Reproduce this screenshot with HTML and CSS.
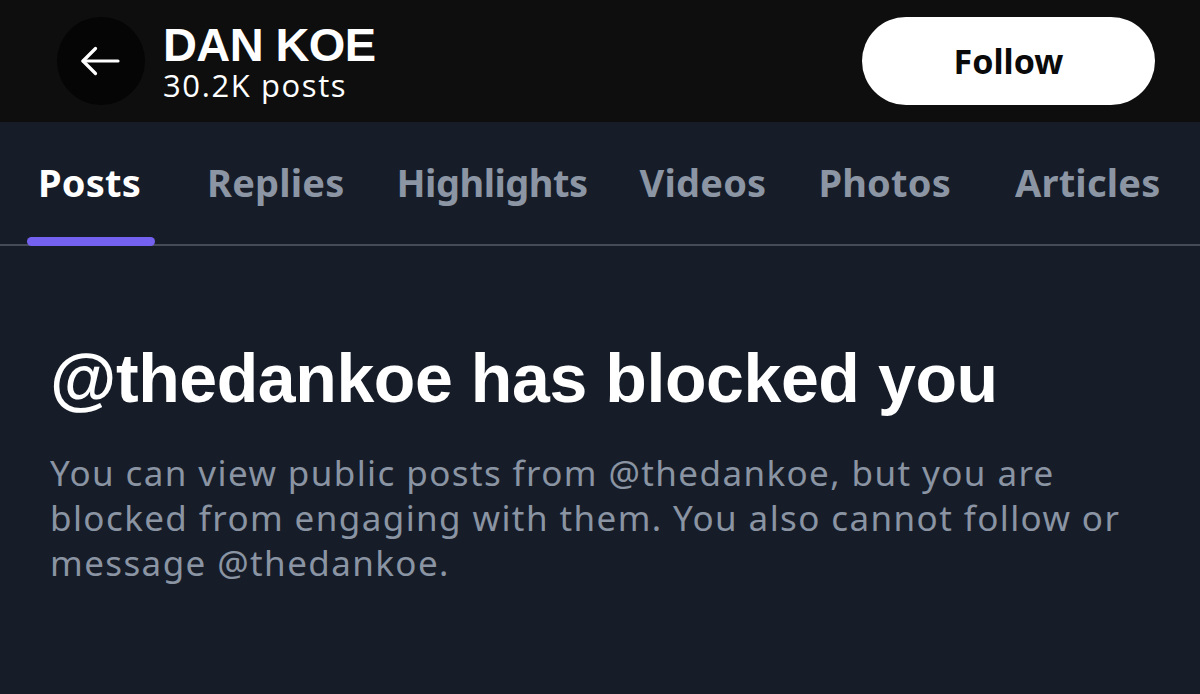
FILE: index.html
```html
<!DOCTYPE html>
<html lang="en">
<head>
<meta charset="utf-8">
<title>DAN KOE</title>
<link rel="stylesheet" href="styles.css">
</head>
<body>
<div class="page">
  <header class="topbar">
    <div class="left">
      <button class="back" aria-label="Back">
        <svg width="40" height="32" viewBox="0 0 40 32" fill="none" stroke="#ffffff" stroke-width="3.2" stroke-linecap="round" stroke-linejoin="round"><path d="M38 16H3"/><path d="M15.5 3.5L3 16l12.5 12.5"/></svg>
      </button>
      <div class="who">
        <div class="name">DAN KOE</div>
        <div class="count">30.2K posts</div>
      </div>
    </div>
    <button class="follow">Follow</button>
  </header>
  <nav class="tabs">
    <div class="tab active">Posts<span class="bar"></span></div>
    <div class="tab">Replies</div>
    <div class="tab tab-narrow">Highlights</div>
    <div class="tab">Videos</div>
    <div class="tab">Photos</div>
    <div class="tab">Articles</div>
  </nav>
  <main class="content">
    <h1 class="title">@thedankoe has blocked you</h1>
    <p class="desc">You can view public posts from @thedankoe, but you are blocked from engaging with them. You also cannot follow or message @thedankoe.</p>
  </main>
</div>
</body>
</html>
```

FILE: styles.css
```css
html, body {
  margin: 0;
  padding: 0;
  background: #161d29;
}
.page {
  width: 1200px;
  height: 694px;
  overflow: hidden;
  background: #161d29;
}
.topbar {
  height: 122px;
  background: #0e0e0e;
  display: flex;
  align-items: center;
  justify-content: space-between;
  padding: 0 45px 0 57px;
  box-sizing: border-box;
}
.left {
  display: flex;
  align-items: center;
  gap: 18px;
}
.back {
  width: 88px;
  height: 88px;
  border-radius: 50%;
  background: #050505;
  border: none;
  padding: 0;
  display: flex;
  align-items: center;
  justify-content: center;
}
.back svg {
  display: block;
  margin-left: -2px;
}
.who {
  display: flex;
  flex-direction: column;
  gap: 2px;
  color: #ffffff;
  margin-top: 0;
}
.name {
  font-family: "Liberation Sans", Arial, sans-serif;
  font-weight: 700;
  font-size: 47px;
  line-height: 47px;
  letter-spacing: -0.6px;
}
.count {
  font-family: "Open Sans", "Noto Sans", sans-serif;
  font-size: 31px;
  line-height: 31px;
  letter-spacing: 1.6px;
}
.follow {
  width: 293px;
  height: 88px;
  border-radius: 44px;
  background: #ffffff;
  border: none;
  color: #0a0a0a;
  font-family: "Noto Sans", "Open Sans", sans-serif;
  font-weight: 700;
  font-size: 34px;
  padding: 0;
}
.tabs {
  height: 124px;
  display: flex;
  align-items: stretch;
  gap: 52px;
  padding: 0 0 0 38px;
  border-bottom: 2px solid #454c57;
  box-sizing: border-box;
}
.tab {
  position: relative;
  display: flex;
  align-items: center;
  font-family: "Noto Sans", "Open Sans", sans-serif;
  font-weight: 700;
  font-size: 38px;
  color: #8b95a3;
  letter-spacing: 0.2px;
  padding-bottom: 2px;
}
.tab-narrow {
  letter-spacing: -0.5px;
}
.tab:first-child {
  margin-right: 14px;
}
.tab:last-child {
  margin-left: 12px;
}
.tab.active {
  color: #ffffff;
}
.bar {
  position: absolute;
  left: -11px;
  right: -14px;
  bottom: -2px;
  height: 9px;
  border-radius: 5px;
  background: #7561f0;
}
.content {
  padding: 94px 50px 0 50px;
}
.title {
  margin: 0;
  font-family: "Liberation Sans", Arial, sans-serif;
  font-weight: 700;
  font-size: 68px;
  line-height: 76px;
  letter-spacing: -0.4px;
  color: #ffffff;
}
.desc {
  margin: 34px 0 0 0;
  font-family: "Noto Sans", "Open Sans", sans-serif;
  font-weight: 400;
  font-size: 35px;
  line-height: 45px;
  color: #8a94a3;
  max-width: 1090px;
  letter-spacing: 1.4px;
}
```
